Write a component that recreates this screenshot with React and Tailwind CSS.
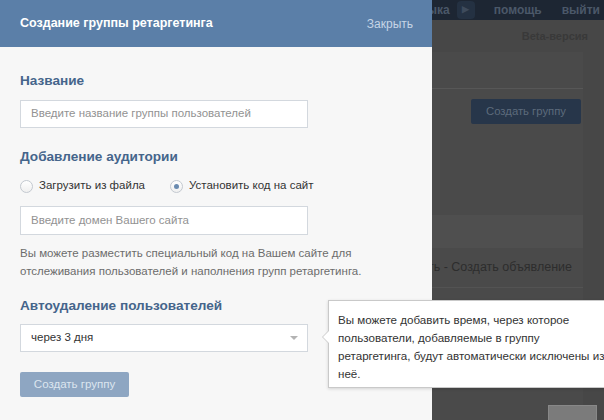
import React from "react";

export default function App() {
  const font = { fontFamily: '"Liberation Sans", Arial, sans-serif' };
  return (
    <div className="relative w-[604px] h-[420px] overflow-hidden bg-[#474747]" style={font}>
      {/* background page (dimmed) */}
      <div className="flex flex-col h-full">
        <div className="h-[20px] bg-[#1d2633] flex items-center justify-end pr-[4px] text-[12px] font-bold text-[#4b5869] whitespace-nowrap">
          <span>языка</span>
          <span className="ml-[7px] w-[18px] h-[18px] bg-[#243142] rounded-sm flex items-center justify-center text-[9px] text-[#3e4b5c]">▶</span>
          <span className="ml-[19px]">помощь</span>
          <span className="ml-[20px]">выйти</span>
        </div>
        <div className="flex-1 flex flex-col pl-[432px]">
          <div className="h-[32px] flex items-center justify-end pr-[16px] text-[11px] font-bold text-[#393939] whitespace-nowrap">Beta-версия</div>
          <div className="w-[151px] flex-1 bg-[#4a4a4a] flex flex-col">
            <div className="h-[37px] border-b border-[#575757]"></div>
            <div className="flex justify-end mt-[10px] pr-[2px]">
              <div className="w-[110px] h-[25px] bg-[#27364a] rounded-[2px] flex items-center justify-center text-[11.3px] text-[#5d6b7c]">Создать группу</div>
            </div>
            <div className="mt-[91px] h-[33px] bg-[#4f4f4f]"></div>
            <div className="h-[40px] flex items-center justify-end pr-[11px] text-[12.5px] text-[#2d2d2d] border-b border-[#535353] whitespace-nowrap overflow-hidden">
              <span>Создать - Создать объявление</span>
            </div>
            <div className="h-[40px] flex items-center justify-end pr-[11px] text-[12.5px] text-[#2d2d2d] whitespace-nowrap overflow-hidden">
              <span>Создать - Создать объявление</span>
            </div>
          </div>
        </div>
      </div>
      <div className="absolute left-[548px] top-[405px] w-[49px] h-[20px] bg-[#7b7b7b] border border-[#888]"></div>

      {/* side panel */}
      <div className="absolute left-0 top-0 w-[432px] h-[420px] bg-[#f7f7f7] flex flex-col">
        <div className="h-[47px] bg-[#5b7fa8] flex items-center justify-between pl-[20px] pr-[19px] shrink-0">
          <span className="text-white font-bold text-[12.5px]">Создание группы ретаргетинга</span>
          <span className="text-[#c6d5e6] text-[12px]">Закрыть</span>
        </div>
        <div className="px-[20px] flex flex-col">
          <div className="mt-[25px] text-[13.6px] font-bold text-[#45658b] leading-[18px]">Название</div>
          <div className="mt-[10px] w-[288px] h-[28px] bg-white border border-[#d3d8de] flex items-center pl-[10px] text-[11.5px] text-[#929292]">
            Введите название группы пользователей
          </div>
          <div className="mt-[20px] text-[13.6px] font-bold text-[#45658b] leading-[18px]">Добавление аудитории</div>
          <div className="mt-[12px] flex items-center text-[11.5px] text-[#333] h-[16px] whitespace-nowrap">
            <span className="w-[13px] h-[13px] rounded-full border border-[#c3c9d0] bg-gradient-to-b from-white to-[#f0f0f0] shrink-0"></span>
            <span className="ml-[6px]">Загрузить из файла</span>
            <span className="ml-[25px] w-[13px] h-[13px] rounded-full border border-[#c3c9d0] bg-gradient-to-b from-white to-[#f0f0f0] flex items-center justify-center shrink-0">
              <span className="w-[5px] h-[5px] rounded-full bg-[#6a8bb0]"></span>
            </span>
            <span className="ml-[6px]">Установить код на сайт</span>
          </div>
          <div className="mt-[12px] w-[288px] h-[29px] bg-white border border-[#d3d8de] flex items-center pl-[10px] text-[11.5px] text-[#929292]">
            Введите домен Вашего сайта
          </div>
          <div className="mt-[9px] text-[11.5px] leading-[18px] text-[#6c6c6c] whitespace-nowrap">
            Вы можете разместить специальный код на Вашем сайте для<br />
            отслеживания пользователей и наполнения групп ретаргетинга.
          </div>
          <div className="mt-[17px] text-[13.6px] font-bold text-[#45658b] leading-[18px]">Автоудаление пользователей</div>
          <div className="mt-[9px] w-[288px] h-[28px] bg-white border border-[#d3d8de] flex items-center justify-between pl-[10px] pr-[9px] text-[11.5px] text-[#333]">
            <span>через 3 дня</span>
            <span className="w-0 h-0 border-l-[4px] border-r-[4px] border-t-[4px] border-l-transparent border-r-transparent border-t-[#b3b3b3]"></span>
          </div>
          <div className="mt-[20px] w-[109px] h-[25px] bg-[#8ea6c2] rounded-[2px] flex items-center justify-center text-[11.5px] text-[#dce5ef]">
            Создать группу
          </div>
        </div>
      </div>

      {/* tooltip */}
      <div className="absolute left-[328px] top-[300px] w-[300px] h-[88px] bg-white border border-[#c9c9c9] pl-[9px] pt-[10px] text-[11.6px] leading-[18px] text-[#333] whitespace-nowrap shadow-[0_1px_3px_rgba(0,0,0,0.15)]">
        Вы можете добавить время, через которое<br />
        пользователи, добавляемые в группу<br />
        ретаргетинга, будут автоматически исключены из<br />
        неё.
        <span className="absolute left-[-7px] top-[29px] w-0 h-0 border-t-[7px] border-b-[7px] border-r-[7px] border-t-transparent border-b-transparent border-r-[#c9c9c9]"></span>
        <span className="absolute left-[-6px] top-[29px] w-0 h-0 border-t-[7px] border-b-[7px] border-r-[7px] border-t-transparent border-b-transparent border-r-white"></span>
      </div>
    </div>
  );
}
